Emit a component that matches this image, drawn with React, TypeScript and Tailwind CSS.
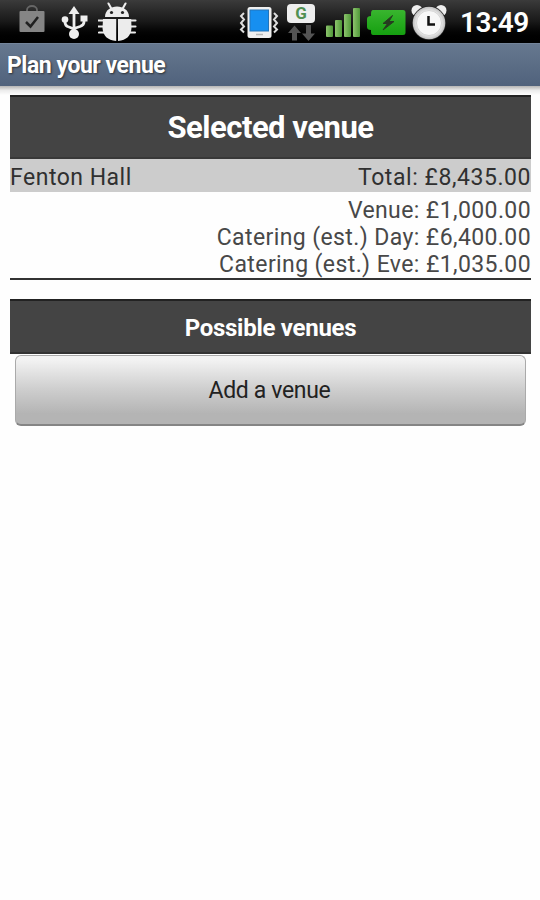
import React from "react";

const ShopIcon = () => (
  <svg className="ml-[19px] h-[43px] w-[26px] shrink-0" viewBox="19 0 26 43">
    <path d="M27 12V10a5 4 0 0 1 10 0v2" fill="none" stroke="#666" strokeWidth="1.800" />
    <rect x="19.500" y="11" width="25" height="21" rx="1" fill="#858585" />
    <path d="M26 22l4.500 4.500L38 17" fill="none" stroke="#202020" strokeWidth="2.500" />
  </svg>
);

const UsbIcon = () => (
  <svg className="ml-[16px] h-[43px] w-[28px] shrink-0" viewBox="61 0 28 43">
    <g fill="none" stroke="#eee" strokeWidth="2.800">
      <path d="M74 13v21M65 20v2q0 4 4 5l5 2M84 18v4q0 3-4 4.500l-6 2" />
    </g>
    <g fill="#eee">
      <path d="M74 6l-5.500 8h11z" />
      <circle cx="65" cy="19.500" r="3.300" />
      <path d="M80.500 15.500h7v6h-7z" />
      <circle cx="74" cy="34" r="5" />
    </g>
  </svg>
);

const BugIcon = () => (
  <svg className="ml-[9px] h-[43px] w-[40px] shrink-0" viewBox="98 0 40 43">
    <path d="M98.500 20.500h5M98.500 26.500h5M99 32.500h7M130.500 20.500h5M130.500 26.500h5M128 32.500h7M111 8l-2.500-4.500M123 8l2.500-4.500" stroke="#ececec" strokeWidth="2.100" strokeLinecap="round" />
    <path d="M105 17C105 3 129 3 129 17z" fill="#ececec" />
    <circle cx="111.500" cy="12.500" r="1.600" fill="#222" />
    <circle cx="122.500" cy="12.500" r="1.600" fill="#222" />
    <path d="M103 19h13.200v22C107.500 40 103 36 102.500 28zM118 19h13.200l.3 9c-.5 8-5 12-13.500 13z" fill="#ececec" />
  </svg>
);

const VibrateIcon = () => (
  <svg className="h-[43px] w-[40px] shrink-0" viewBox="239 0 40 43">
    <path d="M244 13l-3 3 3 3.500-3 3.500 3 3.500-3 3 3 3M274 13l3 3-3 3.500 3 3.500-3 3.500 3 3-3 3" fill="none" stroke="#ddd" strokeWidth="2" />
    <rect x="247.500" y="7" width="24" height="31" rx="2.500" fill="#efefef" />
    <rect x="250" y="10" width="18.500" height="21" fill="#168ff0" stroke="#2474b8" />
    <path d="M256 34.500h7" stroke="#b5b5b5" strokeWidth="1.500" />
  </svg>
);

const DataIcon = () => (
  <div className="ml-[8px] flex h-[43px] w-[28px] shrink-0 flex-col pt-[4px]">
    <div className="flex h-[19px] items-center justify-center rounded-[4px] bg-[#eeeeee] text-[17px] leading-none font-bold text-[#519052]">G</div>
    <svg className="h-[18px] w-[28px]" viewBox="287 23 28 18">
      <path d="M294.500 25.500l6.500 7.500h-4v7.500h-5V33h-4zM308.500 41l6.500-7.500h-4V25h-5v8.500h-4z" fill="#545454" />
    </svg>
  </div>
);

const SignalIcon = () => (
  <svg className="ml-[11px] h-[43px] w-[36px] shrink-0" viewBox="326 0 36 43">
    <defs>
      <linearGradient id="sig">
        <stop stopColor="#8cc46c" />
        <stop offset="1" stopColor="#4f9838" />
      </linearGradient>
    </defs>
    <g fill="url(#sig)">
      <rect x="326" y="25.500" width="7" height="11.500" rx="1" />
      <rect x="335" y="20" width="7" height="17" rx="1" />
      <rect x="344" y="14" width="7" height="23" rx="1" />
      <rect x="353" y="8" width="7" height="29" rx="1" />
    </g>
  </svg>
);

const BatteryIcon = () => (
  <svg className="ml-[5px] h-[43px] w-[39px] shrink-0" viewBox="367 0 39 43">
    <defs>
      <linearGradient id="bat" x2="0" y2="1">
        <stop stopColor="#39b52f" />
        <stop offset="1" stopColor="#15a010" />
      </linearGradient>
    </defs>
    <path d="M373 10h30q2.500 0 2.500 2.500v20q0 2.500-2.500 2.500h-30q-2 0-2-3v-2q-4 0-4-3v-8q0-3 4-3v-2q0-4 2-4z" fill="url(#bat)" />
    <path d="M392.500 15.500l-9.500 8h4.500l-4.500 6.500 11-8.500h-5z" fill="#263c20" stroke="#263c20" />
  </svg>
);

const ClockIcon = () => (
  <svg className="ml-[5px] h-[43px] w-[38px] shrink-0" viewBox="411 0 38 43">
    <defs>
      <radialGradient id="clk">
        <stop offset=".7" stopColor="#f4f4f4" />
        <stop offset="1" stopColor="#bdbdbd" />
      </radialGradient>
    </defs>
    <circle cx="417" cy="10.500" r="5.500" fill="#eee" />
    <circle cx="441" cy="10.500" r="5.500" fill="#eee" />
    <circle cx="429" cy="23" r="17" fill="#222" />
    <circle cx="429" cy="23" r="16.300" fill="url(#clk)" />
    <circle cx="429" cy="23" r="12.500" fill="#f7f7f7" stroke="#d5d5d5" />
    <path d="M428.500 16v8.500h6.500" fill="none" stroke="#111" strokeWidth="2.500" />
  </svg>
);

const costs = ["Venue: £1,000.00", "Catering (est.) Day: £6,400.00", "Catering (est.) Eve: £1,035.00"];

export default function App() {
  return (
    <div className="flex h-[900px] w-[540px] flex-col overflow-hidden bg-[#fefefe] font-['Roboto',sans-serif] text-[#303030]">
      <header className="flex h-[43px] shrink-0 bg-linear-to-b from-[#3b3b3b] via-[#191919] to-black">
        <ShopIcon />
        <UsbIcon />
        <BugIcon />
        <div className="ml-auto flex">
          <VibrateIcon />
          <DataIcon />
          <SignalIcon />
          <BatteryIcon />
          <ClockIcon />
          <span className="ml-[11px] w-[80px] text-[28px] leading-[45px] font-semibold tracking-[-0.6px] whitespace-nowrap text-white">13:49</span>
        </div>
      </header>
      <div className="flex h-[43px] shrink-0 items-center border-t border-[#73849a] bg-linear-to-b from-[#66788f] to-[#50627c] pl-[7px]">
        <h1 className="text-[23px] leading-none font-bold tracking-[-0.47px] whitespace-nowrap text-white [text-shadow:1px_1px_2px_#222c]">Plan your venue</h1>
      </div>
      <div className="h-[9px] shrink-0 bg-linear-to-b from-[#b4b4b4] via-[#ececec] to-[#fefefe]" />
      <main className="ml-[10px] w-[521px]">
        <h2 className="flex h-[64px] items-center justify-center border-y-2 border-t-[#222] border-b-[#383838] bg-[#444] pt-[2px] text-[31px] font-bold tracking-[-0.5px] whitespace-nowrap text-white">Selected venue</h2>
        <div className="flex h-[33px] items-center justify-between bg-[#ccc] pt-[5px] text-[23px] whitespace-nowrap">
          <span className="tracking-[0.5px]">Fenton Hall</span>
          <span className="tracking-[0.55px]">Total: £8,435.00</span>
        </div>
        <div className="flex h-[88px] flex-col items-end border-b-2 border-[#333] pt-[5px]">
          {costs.map((cost) => (
            <p key={cost} className="text-[23px] leading-[27px] tracking-[0.4px] whitespace-nowrap text-[#484848]">{cost}</p>
          ))}
        </div>
        <h3 className="mt-[19px] flex h-[55px] items-center justify-center border-y-2 border-t-[#222] border-b-[#333] bg-[#444] pt-[2px] text-[24px] font-bold tracking-[-0.27px] whitespace-nowrap text-white">Possible venues</h3>
        <button className="mx-[5px] mt-[1px] flex h-[71px] w-[511px] items-center justify-center rounded-[6px] border border-b-2 border-[#aaa] border-b-[#858585] bg-linear-to-b from-[#f3f3f3] from-5% via-[#cdcdcd] via-50% to-[#b4b4b4] to-85% pt-[3px] pr-[2px] text-[23px] tracking-[-0.35px] whitespace-nowrap text-[#222]">Add a venue</button>
      </main>
    </div>
  );
}
